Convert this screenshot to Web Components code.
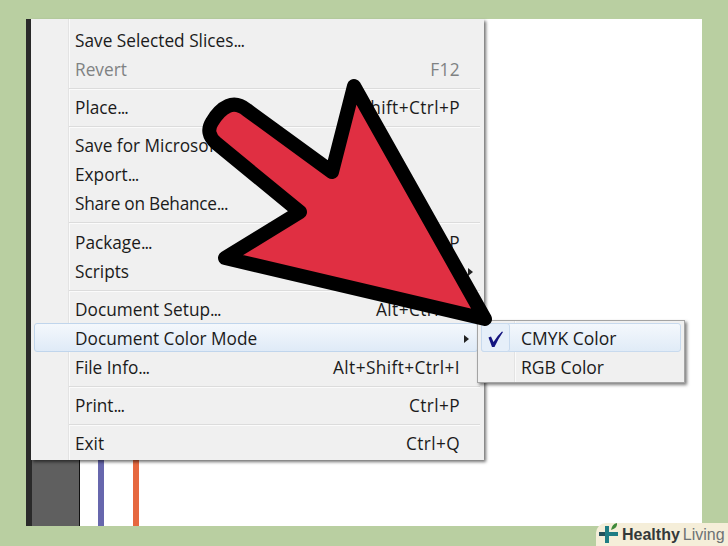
<!DOCTYPE html>
<html lang="en">
<head>
<meta charset="utf-8">
<title>Document Color Mode</title>
<style>
  html, body { margin: 0; height: 100%; }
  body { background: #b9cfa1; width: 728px; height: 546px; overflow: hidden; font-family: "Open Sans", "Liberation Sans", sans-serif; }
</style>
</head>
<body>
<app-frame>
  <pop-menu>
    <menu-row label="Save Selected Slices..."></menu-row>
    <menu-row label="Revert" keys="F12" disabled></menu-row>
    <menu-sep></menu-sep>
    <menu-row label="Place..." keys="Shift+Ctrl+P"></menu-row>
    <menu-sep></menu-sep>
    <menu-row label="Save for Microsoft Office..."></menu-row>
    <menu-row label="Export..."></menu-row>
    <menu-row label="Share on Behance..." style="letter-spacing:-.25px"></menu-row>
    <menu-sep wide></menu-sep>
    <menu-row label="Package..." keys="Alt+Shift+Ctrl+P"></menu-row>
    <menu-row label="Scripts" more></menu-row>
    <menu-sep></menu-sep>
    <menu-row label="Document Setup..." keys="Alt+Ctrl+P"></menu-row>
    <menu-row label="Document Color Mode" more active></menu-row>
    <menu-row label="File Info..." keys="Alt+Shift+Ctrl+I"></menu-row>
    <menu-sep></menu-sep>
    <menu-row label="Print..." keys="Ctrl+P"></menu-row>
    <menu-sep></menu-sep>
    <menu-row label="Exit" keys="Ctrl+Q"></menu-row>
  </pop-menu>
  <sub-menu>
    <sub-row label="CMYK Color" checked></sub-row>
    <sub-row label="RGB Color"></sub-row>
  </sub-menu>
  <red-arrow></red-arrow>
</app-frame>
<brand-badge></brand-badge>

<script>
// Ventana de fondo: barra oscura a la izquierda, guias y lo que flota encima
class AppFrame extends HTMLElement {
    constructor() {
        super();
        this.attachShadow({ mode: "open" });
    }
    connectedCallback() {
        this.shadowRoot.innerHTML = `
            <style>
                :host {
                    display: flex;
                    position: absolute;
                    left: 26px;
                    top: 19px;
                    width: 676px;
                    height: 507px;
                    background: #fff;
                }
                .dock {
                    width: 47px;
                    background: #5f5f5f;
                    border-left: 6px solid #2a2a2a;
                    border-right: 1px solid #111;
                    flex: none;
                }
                .canvas {
                    display: flex;
                    gap: 29px;
                    padding-left: 18px;
                }
                .guide { width: 6px; }
                .blue { background: #6767ad; }
                .orange { background: #e6683f; }
            </style>
            <div class="dock"></div>
            <div class="canvas">
                <div class="guide blue"></div>
                <div class="guide orange"></div>
            </div>
            <slot></slot>
        `;
    }
}

class PopMenu extends HTMLElement {
    constructor() {
        super();
        this.attachShadow({ mode: "open" });
    }
    connectedCallback() {
        this.shadowRoot.innerHTML = `
            <style>
                :host {
                    display: block;
                    position: absolute;
                    left: 5px;
                    top: 0;
                    width: 453px;
                    height: 441px;
                    box-sizing: border-box;
                    padding: 6px 3px 0;
                    background: linear-gradient(90deg, #f0f0f0 37px, #e3e3e3 37px, #e3e3e3 38px, #fafafa 38px, #fafafa 39px, #f0f0f0 39px);
                    box-shadow: 2px 2px 3px rgba(0,0,0,.55);
                }
                .inner { display: flex; flex-direction: column; }
            </style>
            <div class="inner"><slot></slot></div>
        `;
    }
}

// Fila del menu principal
class MenuRow extends HTMLElement {
    constructor() {
        super();
        this.attachShadow({ mode: "open" });
    }
    connectedCallback() {
        const label = this.getAttribute("label");
        const keys = this.getAttribute("keys") || "";
        const more = this.hasAttribute("more") ? '<span class="more"></span>' : "";
        // Los puntos suspensivos van mas juntos que en la fuente
        const text = label.endsWith("...")
            ? `${label.slice(0, -3)}<span class="dots">...</span>`
            : label;
        this.shadowRoot.innerHTML = `
            <style>
                :host {
                    display: flex;
                    align-items: center;
                    justify-content: space-between;
                    box-sizing: border-box;
                    height: 29px;
                    padding: 2px 21px 0 41px;
                    position: relative;
                    font-family: "Open Sans", "Liberation Sans", sans-serif;
                    font-size: 17.25px;
                    color: #1b1b1b;
                    white-space: nowrap;
                }
                :host([disabled]) { color: #7f8283; }
                :host([active]) {
                    margin-right: 3px;
                    border: 1px solid #c0d5ec;
                    border-radius: 3px;
                    padding: 2px 20px 0 40px;
                    background: linear-gradient(#f4f8fc, #dfeaf7);
                }
                .keys { letter-spacing: .4px; }
                .dots { letter-spacing: -1px; }
                .more {
                    position: absolute;
                    right: 8px;
                    top: 50%;
                    margin-top: -3px;
                    border-left: 5px solid #222;
                    border-top: 4px solid transparent;
                    border-bottom: 4px solid transparent;
                }
            </style>
            <span>${text}</span><span class="keys">${keys}</span>${more}
        `;
    }
}

class MenuSep extends HTMLElement {
    constructor() {
        super();
        this.attachShadow({ mode: "open" });
    }
    connectedCallback() {
        this.shadowRoot.innerHTML = `
            <style>
                :host {
                    display: block;
                    height: 9px;
                    margin: 0 1px 0 35px;
                    overflow: hidden;
                }
                :host([wide]) { height: 10px; }
                div {
                    margin-top: 5px;
                    height: 1px;
                    background: #dcdcdc;
                    border-bottom: 1px solid #fbfbfb;
                }
            </style>
            <div></div>
        `;
    }
}

class SubMenu extends HTMLElement {
    constructor() {
        super();
        this.attachShadow({ mode: "open" });
    }
    connectedCallback() {
        this.shadowRoot.innerHTML = `
            <style>
                :host {
                    display: block;
                    position: absolute;
                    left: 451px;
                    top: 301px;
                    width: 208px;
                    height: 63px;
                    box-sizing: border-box;
                    padding: 2px 3px 0;
                    border: 1px solid #a4a4a4;
                    background: linear-gradient(90deg, #f0f0f0 36px, #e3e3e3 36px, #e3e3e3 37px, #fafafa 37px, #fafafa 38px, #f0f0f0 38px);
                    box-shadow: 2px 2px 3px rgba(0,0,0,.5);
                }
            </style>
            <slot></slot>
        `;
    }
}

class SubRow extends HTMLElement {
    constructor() {
        super();
        this.attachShadow({ mode: "open" });
    }
    connectedCallback() {
        const checked = this.hasAttribute("checked");
        this.shadowRoot.innerHTML = `
            <style>
                :host {
                    display: flex;
                    align-items: center;
                    box-sizing: border-box;
                    height: 29px;
                    padding-left: 40px;
                    position: relative;
                    font-family: "Open Sans", "Liberation Sans", sans-serif;
                    font-size: 17.5px;
                    color: #1b1b1b;
                    white-space: nowrap;
                }
                :host([checked]) {
                    border: 1px solid #c8daee;
                    border-radius: 3px;
                    padding-left: 39px;
                    background: linear-gradient(#f4f8fc, #e0ebf7);
                }
                .check {
                    position: absolute;
                    left: -1px;
                    top: -1px;
                    width: 27px;
                    height: 27px;
                    border: 1px solid #c8daee;
                    border-radius: 3px;
                    background: #e6eff9;
                }
                svg { position: absolute; left: 6px; top: 6px; }
            </style>
            ${checked ? `<div class="check"><svg width="16" height="18" viewBox="0 0 16 18"><path d="M0.5 7.5 L3 6.5 L5.5 12 Q9 6 14 1.5 L15 2 Q10 9 6.5 17 L4 17 Z" fill="#14147f"/></svg></div>` : ""}
            <span>${this.getAttribute("label")}</span>
        `;
    }
}

// La flecha roja que apunta al submenu
class RedArrow extends HTMLElement {
    constructor() {
        super();
        this.attachShadow({ mode: "open" });
    }
    connectedCallback() {
        this.shadowRoot.innerHTML = `
            <style>
                :host {
                    display: block;
                    position: absolute;
                    left: -26px;
                    top: -19px;
                    width: 728px;
                    height: 546px;
                    pointer-events: none;
                }
                svg { display: block; }
            </style>
            <svg width="728" height="546" viewBox="0 0 728 546">
                <path d="M332 172 L354 86 L485 319 L225 258 L300 212 L216 143 Q205 133 212 122 Q219 110 228 106 Q237 102 247 110 Z"
                      fill="#e02f42" stroke="#000" stroke-width="14" stroke-linejoin="round"/>
            </svg>
        `;
    }
}

// Marca de agua de la esquina
class BrandBadge extends HTMLElement {
    constructor() {
        super();
        this.attachShadow({ mode: "open" });
    }
    connectedCallback() {
        this.shadowRoot.innerHTML = `
            <style>
                :host {
                    display: flex;
                    align-items: center;
                    position: absolute;
                    left: 596px;
                    top: 523px;
                    width: 132px;
                    height: 23px;
                    box-sizing: border-box;
                    padding-left: 2px;
                    background: #f5eed9;
                    border-top-left-radius: 10px;
                    font-family: "Liberation Sans", sans-serif;
                    font-size: 16px;
                    line-height: 21px;
                    white-space: nowrap;
                }
                svg { flex: none; }
                b { color: #33393a; }
                span { color: #6d7274; margin-left: 3px; }
            </style>
            <svg width="24" height="23" viewBox="0 0 24 23">
                <path d="M7 3 H11 V9 H20 V13 H11 V20 H7 V13 H1 V9 H7 Z" fill="#1f7d84"/>
                <path d="M7 9 H1 V13 H7 Z" fill="#24525c"/>
                <path d="M13 7 Q14 1 19 0 Q20 5 13 7 Z" fill="#3f8a3a"/>
            </svg>
            <b>Healthy</b><span>Living</span>
        `;
    }
}

customElements.define("app-frame", AppFrame);
customElements.define("pop-menu", PopMenu);
customElements.define("menu-row", MenuRow);
customElements.define("menu-sep", MenuSep);
customElements.define("sub-menu", SubMenu);
customElements.define("sub-row", SubRow);
customElements.define("red-arrow", RedArrow);
customElements.define("brand-badge", BrandBadge);
</script>
</body>
</html>
